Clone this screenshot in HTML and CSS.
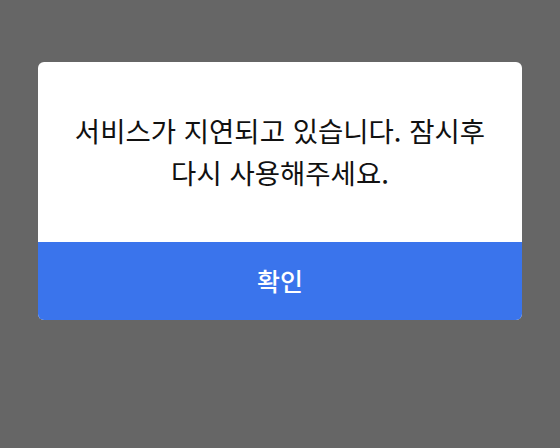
FILE: index.html
```html
<!DOCTYPE html>
<html lang="ko">
<head>
<meta charset="utf-8">
<link rel="stylesheet" href="styles.css">
</head>
<body>
<div class="overlay">
  <div class="dialog">
    <div class="message">서비스가 지연되고 있습니다. 잠시후<br>다시 사용해주세요.</div>
    <button class="confirm">확인</button>
  </div>
</div>
</body>
</html>
```
FILE: styles.css
```css
html, body {
  margin: 0;
  padding: 0;
  width: 560px;
  height: 448px;
  background: #666666;
  font-family: "Noto Sans CJK KR", "Noto Sans", sans-serif;
}
.overlay {
  padding-top: 62px;
  display: flex;
  justify-content: center;
}
.dialog {
  width: 484px;
  background: #ffffff;
  border-radius: 6px;
  overflow: hidden;
  display: flex;
  flex-direction: column;
}
.message {
  height: 180px;
  display: flex;
  align-items: center;
  justify-content: center;
  text-align: center;
  font-size: 27.5px;
  line-height: 42px;
  color: #111111;
  padding-bottom: 2px;
  box-sizing: border-box;
}
.confirm {
  height: 78px;
  border: none;
  margin: 0;
  padding: 0 0 2px;
  background: #3a74ec;
  color: #ffffff;
  font-family: inherit;
  font-size: 25px;
  font-weight: 500;
}
```
